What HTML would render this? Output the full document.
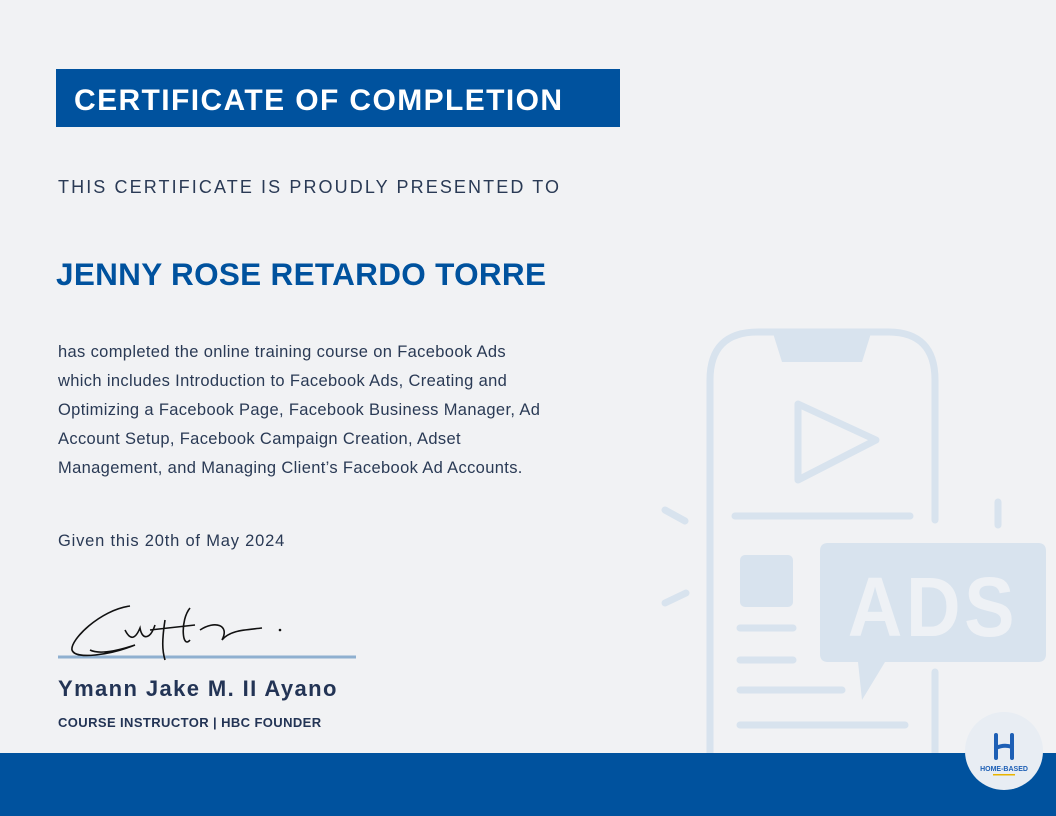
<!DOCTYPE html>
<html><head><meta charset="utf-8"><style>
body{margin:0;width:1056px;height:816px;background:#f1f2f4;position:relative;overflow:hidden;font-family:"Liberation Sans",sans-serif;}
.a{position:absolute}
</style></head><body>
<svg class="a" style="left:0;top:0" width="1056" height="816">
<g stroke="#d8e3ee" fill="none" stroke-width="7" stroke-linecap="round" stroke-linejoin="round">
<path d="M710 790 V380 Q710 332 758 332 H888 Q935 332 935 380 V520"/>
<path d="M935 672 V790"/>
<path d="M798 404 L798 480 L876 440 Z"/>
<line x1="735" y1="516" x2="910" y2="516"/>
<line x1="740" y1="628" x2="793" y2="628"/>
<line x1="740" y1="660" x2="793" y2="660"/>
<line x1="740" y1="690" x2="842" y2="690"/>
<line x1="740" y1="725" x2="905" y2="725"/>
<line x1="665" y1="510" x2="685" y2="521"/>
<line x1="665" y1="603" x2="686" y2="593"/>
<line x1="998" y1="502" x2="998" y2="525"/>
</g>
<path d="M772 330 H872 L862 362 H782 Z" fill="#d8e3ee"/>
<rect x="740" y="555" width="53" height="52" rx="5" fill="#d8e3ee"/>
<path d="M828 543 H1038 Q1046 543 1046 551 V654 Q1046 662 1038 662 H885 L862 700 L858 662 H828 Q820 662 820 654 V551 Q820 543 828 543Z" fill="#d8e3ee"/>
<text x="933" y="636" text-anchor="middle" font-family="Liberation Sans" font-weight="bold" font-size="84" fill="#eef1f5" letter-spacing="4" transform="translate(933 0) scale(0.9 1) translate(-933 0)">ADS</text>
<line x1="58" y1="657" x2="356" y2="657" stroke="#8fb0d0" stroke-width="3"/>
<path d="M130 606 C100 610 70 640 72 650 C75 660 110 655 135 645 C120 650 100 655 90 650 M125 630 C130 640 135 640 140 628 C142 640 150 640 155 625 M165 620 C162 640 162 650 165 660 M150 630 L195 625 M190 608 C180 620 182 650 190 640 M200 630 C215 620 230 625 222 640 C230 630 245 630 262 628" stroke="#111" stroke-width="1.6" fill="none"/>
<circle cx="280" cy="630" r="1.3" fill="#111"/>
<rect x="0" y="753" width="1056" height="63" fill="#00529e"/>
<circle cx="1004" cy="751" r="39" fill="#e8edf3"/>
<path d="M996 735 V758 M1012 735 V758 M996 748 Q1004 744 1012 747" stroke="#1d5fb5" stroke-width="4" fill="none" stroke-linecap="round"/>
<text x="1004" y="771" text-anchor="middle" font-size="7" font-weight="bold" fill="#1d5fb5">HOME-BASED</text>
<rect x="993" y="774" width="22" height="1.5" fill="#e8b400"/>
</svg>
<div class="a" style="left:56px;top:69px;width:564px;height:58px;background:#00529e"></div>
<div class="a" style="left:74px;top:83px;color:#fff;font-weight:bold;font-size:30px;letter-spacing:1.4px;line-height:36px">CERTIFICATE OF COMPLETION</div>
<div class="a" style="left:58px;top:177px;color:#2a3a55;font-size:18px;letter-spacing:2.1px">THIS CERTIFICATE IS PROUDLY PRESENTED TO</div>
<div class="a" style="left:56px;top:256px;color:#00529e;font-weight:bold;font-size:31.5px;letter-spacing:0.3px">JENNY ROSE RETARDO TORRE</div>
<div class="a" style="left:58px;top:338px;white-space:nowrap;color:#2a3a55;font-size:16.5px;line-height:29px;letter-spacing:0.35px">has completed the online training course on Facebook Ads<br>which includes Introduction to Facebook Ads, Creating and<br>Optimizing a Facebook Page, Facebook Business Manager, Ad<br>Account Setup, Facebook Campaign Creation, Adset<br>Management, and Managing Client’s Facebook Ad Accounts.</div>
<div class="a" style="left:58px;top:532px;color:#2a3a55;font-size:16.5px;letter-spacing:0.8px">Given this 20th of May 2024</div>
<div class="a" style="left:58px;top:676px;color:#233455;font-weight:bold;font-size:22px;letter-spacing:1.4px">Ymann Jake M. II Ayano</div>
<div class="a" style="left:58px;top:715px;color:#233455;font-weight:bold;font-size:13px;letter-spacing:0.4px">COURSE INSTRUCTOR | HBC FOUNDER</div>
</body></html>
